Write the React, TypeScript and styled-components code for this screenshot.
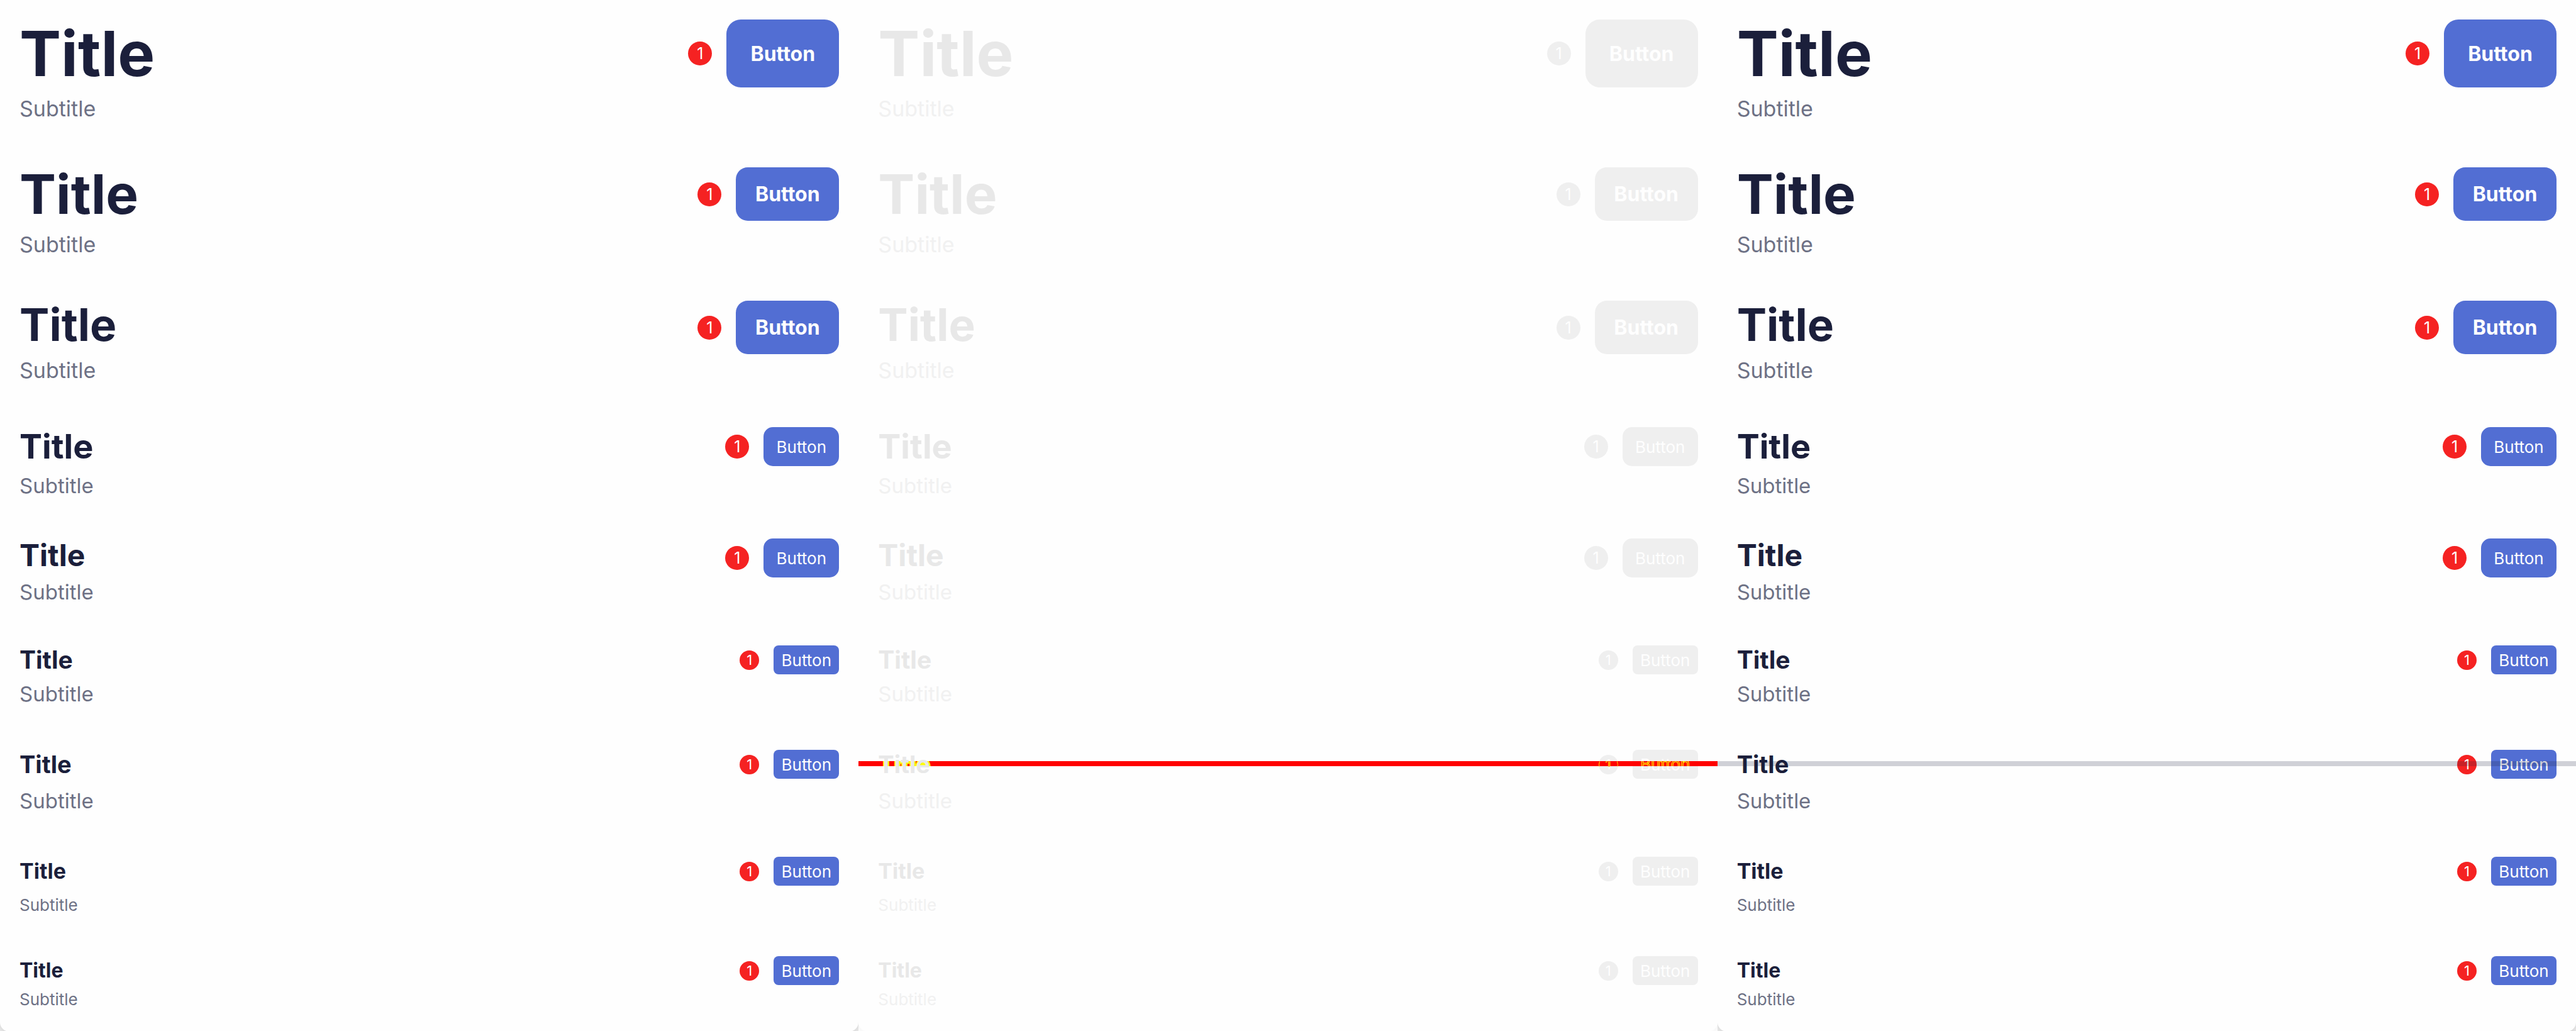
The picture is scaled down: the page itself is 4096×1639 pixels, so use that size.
import React from "react";
import styled, { createGlobalStyle, css } from "styled-components";

type Tone = "color" | "faded";
type ButtonSize = "xl" | "lg" | "md" | "sm";

interface HeaderSpec {
  fontSize: number;
  lineHeight: number;
  gap: number;
  subtitle: number;
  space: number;
  button: ButtonSize;
  badge: number;
}

const headers: HeaderSpec[] = [
  { fontSize: 99, lineHeight: 108, gap: 11, subtitle: 34, space: 70, button: "xl", badge: 38 },
  { fontSize: 87, lineHeight: 85, gap: 15, subtitle: 34, space: 66, button: "lg", badge: 38 },
  { fontSize: 71, lineHeight: 77, gap: 11, subtitle: 34, space: 67, button: "lg", badge: 38 },
  { fontSize: 54, lineHeight: 62, gap: 8, subtitle: 33, space: 61, button: "md", badge: 38 },
  { fontSize: 48, lineHeight: 54, gap: 8, subtitle: 33, space: 62, button: "md", badge: 38 },
  { fontSize: 39, lineHeight: 46, gap: 8, subtitle: 33, space: 66, button: "sm", badge: 31 },
  { fontSize: 38, lineHeight: 46, gap: 12, subtitle: 33, space: 66, button: "sm", badge: 31 },
  { fontSize: 34, lineHeight: 46, gap: 8, subtitle: 26, space: 58, button: "sm", badge: 31 },
  { fontSize: 32, lineHeight: 46, gap: 0, subtitle: 26, space: 0, button: "sm", badge: 31 },
];

const ruledRow = 6;

const palette = {
  color: { title: "#1b1f3b", subtitle: "#6d7185", button: "#526ed3", badge: "#f52222" },
  faded: { title: "#e8e8e8", subtitle: "#f1f1f1", button: "#efefef", badge: "#efefef" },
};

const buttonSizes = {
  xl: css`width: 179px; height: 108px; border-radius: 23px; font-size: 32px; font-weight: 700;`,
  lg: css`width: 164px; height: 85px; border-radius: 19px; font-size: 32px; font-weight: 700;`,
  md: css`width: 120px; height: 62px; border-radius: 15px; font-size: 26px; font-weight: 400;`,
  sm: css`width: 104px; height: 46px; border-radius: 8px; font-size: 26px; font-weight: 400;`,
};

const GlobalStyle = createGlobalStyle`
  *, *::before, *::after { box-sizing: border-box; }
  body {
    margin: 0;
    background: #ffffff;
    font-family: Inter, "Liberation Sans", sans-serif;
  }
`;

const Board = styled.main`
  display: grid;
  grid-template-columns: repeat(3, minmax(0, 1fr));
  min-height: 100vh;
`;

const Pane = styled.section<{ $tone: Tone }>`
  display: flex;
  overflow: hidden;
  background: ${({ $tone }) => ($tone === "color" ? "#f2f2f2" : "#fbfbfb")};
`;

const Card = styled.div<{ $tone: Tone }>`
  flex: 1;
  min-width: 0;
  padding: 31px 31px 28px;
  background: #fefefe;
  border-radius: 0 0 15px 15px;
  box-shadow: 0 4px 16px rgba(0, 0, 0, ${({ $tone }) => ($tone === "color" ? 0.16 : 0.02)});
`;

const Header = styled.header<{ $space: number }>`
  position: relative;
  display: flex;
  justify-content: space-between;
  align-items: flex-start;
  margin-bottom: ${({ $space }) => $space}px;
`;

/* Anti-aliasing marks: a yellow contour, visible only where the rule crosses. */
const crossedTitle = css`
  position: relative;
  z-index: 2;
  &::before {
    content: "Title";
    position: absolute;
    inset: 0 -4px;
    padding-left: 4px;
    z-index: -1;
    -webkit-text-stroke: 4px #ffff00;
    clip-path: inset(18px 0 20px 0);
  }
`;

const crossedBadge = css`
  position: relative;
  &::after {
    content: "1";
    position: absolute;
    inset: 0;
    z-index: 2;
    display: flex;
    align-items: center;
    justify-content: center;
    border: 1px solid #ffff00;
    border-radius: 50%;
    color: #ff0000;
    -webkit-text-stroke: 1px #ffff00;
    clip-path: inset(11px 0 12px 0);
  }
`;

const crossedButton = css`
  position: relative;
  &::after {
    content: "Button";
    position: absolute;
    inset: 0;
    z-index: 2;
    line-height: 46px;
    color: #ff0000;
    -webkit-text-stroke: 1px #ffff00;
    clip-path: inset(18px 0 20px 0);
  }
`;

const Title = styled.h2<{ $spec: HeaderSpec; $tone: Tone; $crossed: boolean }>`
  margin: 0;
  font-size: ${({ $spec }) => $spec.fontSize}px;
  line-height: ${({ $spec }) => $spec.lineHeight}px;
  font-weight: 700;
  color: ${({ $tone }) => palette[$tone].title};
  ${({ $crossed }) => $crossed && crossedTitle}
`;

const Subtitle = styled.p<{ $spec: HeaderSpec; $tone: Tone }>`
  margin: ${({ $spec }) => $spec.gap}px 0 0;
  font-size: ${({ $spec }) => $spec.subtitle}px;
  line-height: 46px;
  color: ${({ $tone }) => palette[$tone].subtitle};
`;

const Actions = styled.div`
  display: flex;
  align-items: center;
  gap: 23px;
`;

const Badge = styled.span<{ $size: number; $tone: Tone; $crossed: boolean }>`
  display: flex;
  align-items: center;
  justify-content: center;
  width: ${({ $size }) => $size}px;
  height: ${({ $size }) => $size}px;
  border-radius: 50%;
  background: ${({ $tone }) => palette[$tone].badge};
  color: #fefefe;
  font-size: ${({ $size }) => ($size > 31 ? 25 : 22)}px;
  ${({ $crossed }) => $crossed && crossedBadge}
`;

const ActionButton = styled.button<{ $size: ButtonSize; $tone: Tone; $crossed: boolean }>`
  padding: 0;
  border: 0;
  background: ${({ $tone }) => palette[$tone].button};
  color: #fefefe;
  font-family: inherit;
  text-align: center;
  ${({ $size }) => buttonSizes[$size]}
  ${({ $crossed }) => $crossed && crossedButton}
`;

const Rule = styled.div<{ $tone: Tone }>`
  position: absolute;
  z-index: 1;
  top: 18px;
  left: -31px;
  right: -31px;
  height: 8px;
  background: ${({ $tone }) => ($tone === "color" ? "rgba(27, 31, 59, 0.2)" : "#ff0000")};
`;

function Column({ tone, ruled }: { tone: Tone; ruled: boolean }) {
  return (
    <Pane $tone={tone}>
      <Card $tone={tone}>
        {headers.map((spec, i) => {
          const hasRule = ruled && i === ruledRow;
          const crossed = hasRule && tone === "faded";
          return (
            <Header key={i} $space={spec.space}>
              <div>
                <Title $spec={spec} $tone={tone} $crossed={crossed}>Title</Title>
                <Subtitle $spec={spec} $tone={tone}>Subtitle</Subtitle>
              </div>
              <Actions>
                <Badge $size={spec.badge} $tone={tone} $crossed={crossed}>1</Badge>
                <ActionButton type="button" $size={spec.button} $tone={tone} $crossed={crossed}>
                  Button
                </ActionButton>
              </Actions>
              {hasRule && <Rule $tone={tone} />}
            </Header>
          );
        })}
      </Card>
    </Pane>
  );
}

export default function App() {
  return (
    <>
      <GlobalStyle />
      <Board>
        <Column tone="color" ruled={false} />
        <Column tone="faded" ruled />
        <Column tone="color" ruled />
      </Board>
    </>
  );
}
